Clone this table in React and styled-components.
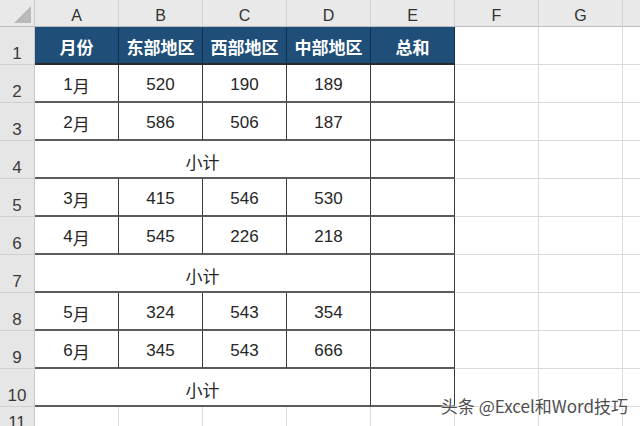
import styled, { createGlobalStyle } from "styled-components";

const GlobalStyle = createGlobalStyle`
  html, body {
    margin: 0;
    padding: 0;
    background: #ffffff;
    overflow: hidden;
  }
  body {
    font-family: "Liberation Sans", "Noto Sans CJK SC", sans-serif;
  }
`;

const Sheet = styled.div`
  position: relative;
  width: 640px;
  height: 426px;
  overflow: hidden;
  display: grid;
  grid-template-columns: 35px repeat(8, 84px);
  grid-template-rows: 27px repeat(10, 38px) 27px;
`;

const Corner = styled.div`
  background: #e9e9e9;
  border-right: 1px solid #cdcdcd;
  border-bottom: 1px solid #bcbcbc;
  box-sizing: border-box;
  display: flex;
  align-items: flex-end;
  justify-content: flex-end;
  padding: 0 3px 3px 0;
`;

const ColHead = styled.div`
  background: #e9e9e9;
  border-right: 1px solid #d2d2d2;
  border-bottom: 1px solid #bcbcbc;
  box-sizing: border-box;
  display: flex;
  align-items: flex-end;
  justify-content: center;
  padding-bottom: 1px;
  font-size: 16px;
  color: #333;
`;

const RowHead = styled.div`
  background: #e6e6e6;
  border-right: 1px solid #c9c9c9;
  border-bottom: 1px solid #d0d0d0;
  box-sizing: border-box;
  display: flex;
  align-items: flex-end;
  justify-content: center;
  font-size: 17px;
  color: #3a3a3a;
`;

const Cell = styled.div`
  grid-column: span ${(p) => p.$span || 1};
  box-sizing: border-box;
  display: flex;
  align-items: center;
  justify-content: center;
  padding-top: ${(p) => (p.$table ? "4px" : "0")};
  font-size: 17px;
  color: #262626;
  background: #fff;
  border-right: 1px solid ${(p) => (p.$table ? "#3c3c3c" : "#dadada")};
  border-bottom: ${(p) => (p.$table ? "2px solid #5c5c5c" : "1px solid #dadada")};
`;

const HeadCell = styled(Cell)`
  background: #1f4e79;
  color: #ffffff;
  font-weight: bold;
  font-family: "Noto Sans CJK SC", sans-serif;
  font-size: 17px;
  padding-top: 2px;
  border-right: 1px solid #10304f;
  border-bottom: 2px solid #2a2a2a;
`;

const Cjk = styled.span`
  font-family: "Noto Sans CJK SC", sans-serif;
`;

const Watermark = styled.div`
  position: absolute;
  right: 12px;
  top: 393px;
  font-family: "Noto Sans CJK SC", sans-serif;
  font-size: 17px;
  color: #4d4d4d;
  text-shadow: 0 0 2px #fff, 0 0 2px #fff, 0 0 2px #fff;
`;

const letters = ["A", "B", "C", "D", "E", "F", "G", ""];
const heads = ["月份", "东部地区", "西部地区", "中部地区", "总和"];

const rows = [
  ["1", "520", "190", "189"],
  ["2", "586", "506", "187"],
  "sub",
  ["3", "415", "546", "530"],
  ["4", "545", "226", "218"],
  "sub",
  ["5", "324", "543", "354"],
  ["6", "345", "543", "666"],
  "sub",
];

const Blank = () => (
  <>
    <Cell />
    <Cell />
    <Cell />
  </>
);

const App = () => {
  return (
    <>
      <GlobalStyle />
      <Sheet>
        <Corner>
          <svg width="17" height="17" viewBox="0 0 17 17">
            <polygon points="17,0 17,17 0,17" fill="#b9b9b9" />
          </svg>
        </Corner>
        {letters.map((l, i) => (
          <ColHead key={i}>{l}</ColHead>
        ))}

        <RowHead>1</RowHead>
        {heads.map((h) => (
          <HeadCell key={h}>{h}</HeadCell>
        ))}
        <Blank />

        {rows.map((r, i) => (
          <>
            <RowHead key={"n" + i}>{i + 2}</RowHead>
            {r === "sub" ? (
              <>
                <Cell $table $span={4}>
                  <Cjk>小计</Cjk>
                </Cell>
                <Cell $table />
              </>
            ) : (
              <>
                <Cell $table>
                  {r[0]}
                  <Cjk>月</Cjk>
                </Cell>
                <Cell $table>{r[1]}</Cell>
                <Cell $table>{r[2]}</Cell>
                <Cell $table>{r[3]}</Cell>
                <Cell $table />
              </>
            )}
            <Blank />
          </>
        ))}

        <RowHead>11</RowHead>
        {letters.map((l, i) => (
          <Cell key={"e" + i} />
        ))}

        <Watermark>头条 @Excel和Word技巧</Watermark>
      </Sheet>
    </>
  );
};

export default App;
